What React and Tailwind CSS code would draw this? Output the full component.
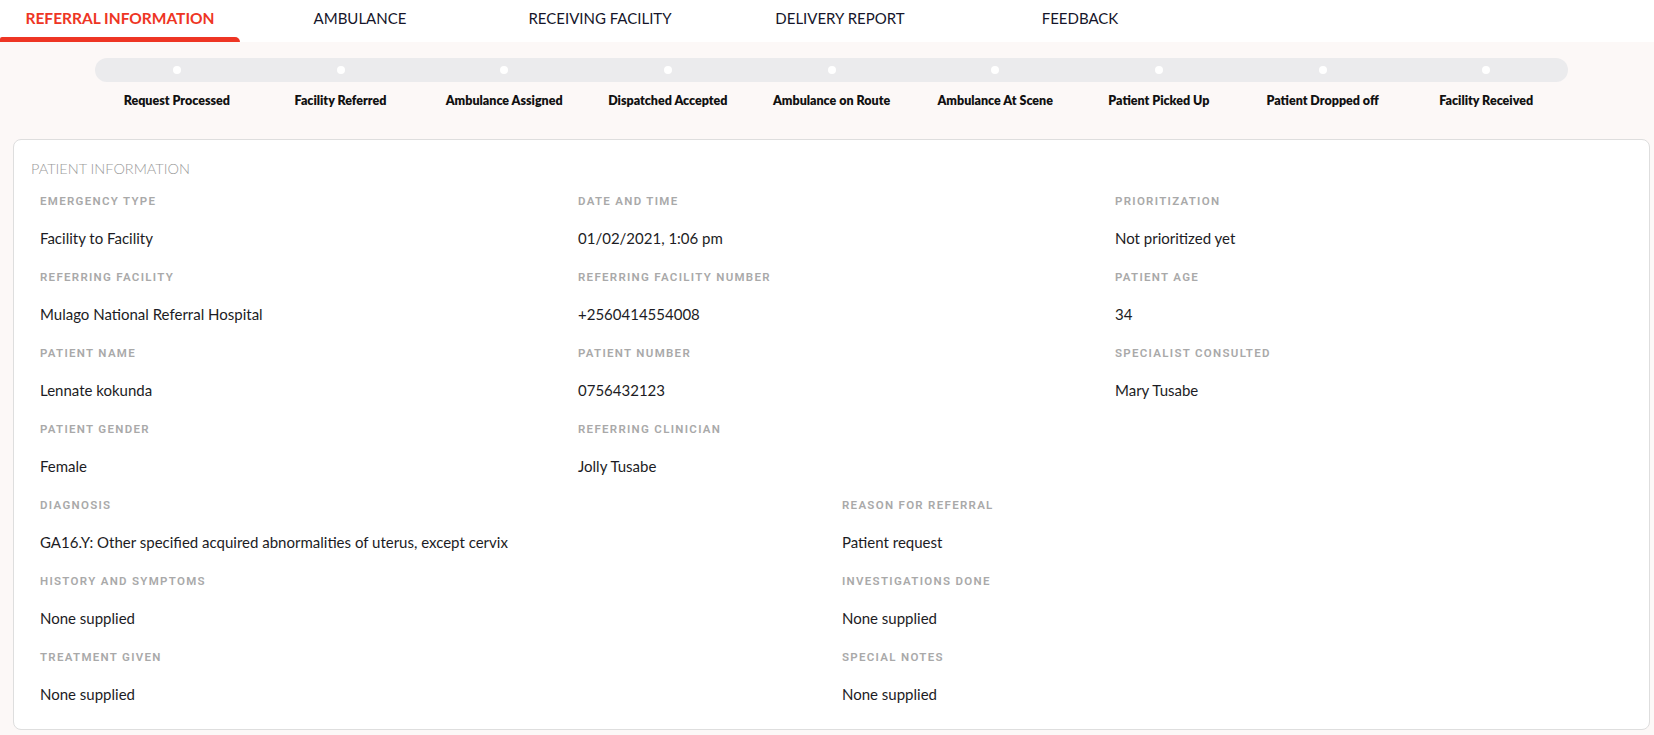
import React from "react";

const tabs = ["REFERRAL INFORMATION", "AMBULANCE", "RECEIVING FACILITY", "DELIVERY REPORT", "FEEDBACK"];
const steps = [
  "Request Processed",
  "Facility Referred",
  "Ambulance Assigned",
  "Dispatched Accepted",
  "Ambulance on Route",
  "Ambulance At Scene",
  "Patient Picked Up",
  "Patient Dropped off",
  "Facility Received",
];

const top = [
  ["EMERGENCY TYPE", "Facility to Facility"],
  ["DATE AND TIME", "01/02/2021, 1:06 pm"],
  ["PRIORITIZATION", "Not prioritized yet"],
  ["REFERRING FACILITY", "Mulago National Referral Hospital"],
  ["REFERRING FACILITY NUMBER", "+2560414554008"],
  ["PATIENT AGE", "34"],
  ["PATIENT NAME", "Lennate kokunda"],
  ["PATIENT NUMBER", "0756432123"],
  ["SPECIALIST CONSULTED", "Mary Tusabe"],
  ["PATIENT GENDER", "Female"],
  ["REFERRING CLINICIAN", "Jolly Tusabe"],
];

const bottom = [
  ["DIAGNOSIS", "GA16.Y: Other specified acquired abnormalities of uterus, except cervix"],
  ["REASON FOR REFERRAL", "Patient request"],
  ["HISTORY AND SYMPTOMS", "None supplied"],
  ["INVESTIGATIONS DONE", "None supplied"],
  ["TREATMENT GIVEN", "None supplied"],
  ["SPECIAL NOTES", "None supplied"],
];

function Field({ label, value }) {
  return (
    <div className="flex flex-col">
      <div className="h-[38px] flex items-center text-[11.5px] font-semibold tracking-[1.3px] text-[#a9a9a9] font-['Roboto',sans-serif]">
        {label}
      </div>
      <div className="h-[38px] pb-[4px] flex items-center text-[15px] text-[#1c1c24] font-['Lato',sans-serif]">
        {value}
      </div>
    </div>
  );
}

export default function App() {
  return (
    <div className="w-[1654px] h-[735px] bg-[#fcf8f7] font-['Lato',sans-serif] overflow-hidden">
      <div className="h-[42px] bg-white flex">
        {tabs.map((t, i) => (
          <div key={t} className="w-[240px] h-[42px] flex flex-col items-center">
            <div
              className={
                "h-[37px] flex items-center " +
                (i === 0 ? "text-[15.5px] text-[#ee3524] font-bold" : "text-[15px] text-[#15152a]")
              }
            >
              {t}
            </div>
            {i === 0 && <div className="h-[5px] w-full bg-[#ee3524] rounded-tr-[5px] rounded-tl-[2px]" />}
          </div>
        ))}
      </div>

      <div className="pt-[16px] ml-[95px] w-[1473px]">
        <div className="h-[24px] rounded-full bg-[#ebebed] flex">
          {steps.map((s) => (
            <div key={s} className="flex-1 flex items-center justify-center">
              <div className="w-[8px] h-[8px] rounded-full bg-white" />
            </div>
          ))}
        </div>
        <div className="flex mt-[11px]">
          {steps.map((s) => (
            <div key={s} className="flex-1 text-center text-[12.5px] font-extrabold text-[#111] leading-[15px]">
              {s}
            </div>
          ))}
        </div>
      </div>

      <div className="mt-[31px] ml-[13px] w-[1637px] h-[591px] bg-white border border-[#dedede] rounded-[8px] pl-[26px]">
        <div className="pt-[19px] -ml-[9px] text-[14.5px] font-light text-[#9a9a9a] leading-[20px]">
          PATIENT INFORMATION
        </div>
        <div className="grid grid-cols-[538px_537px_1fr] mt-[4px]">
          {top.map(([l, v]) => (
            <Field key={l} label={l} value={v} />
          ))}
        </div>
        <div className="grid grid-cols-[802px_1fr]">
          {bottom.map(([l, v]) => (
            <Field key={l} label={l} value={v} />
          ))}
        </div>
      </div>
    </div>
  );
}
